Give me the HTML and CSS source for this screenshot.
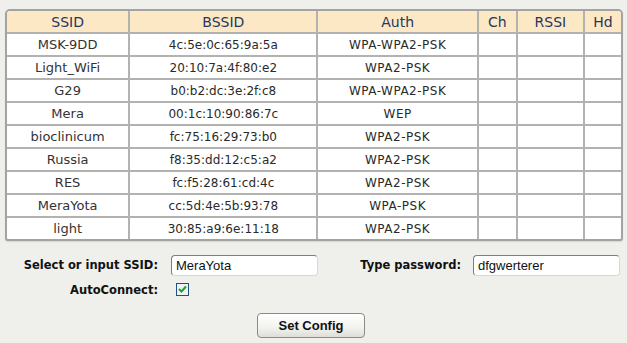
FILE: index.html
```html
<!DOCTYPE html>
<html lang="en">
<head>
    <meta charset="UTF-8">
    <title>WiFi Config</title>
    <link rel="stylesheet" href="styles.css">
</head>
<body>

    <!-- Scan results -->
    <div class="scan">
        <table class="nets">
            <colgroup>
                <col class="c-ssid">
                <col class="c-bssid">
                <col class="c-auth">
                <col class="c-ch">
                <col class="c-rssi">
                <col class="c-hd">
            </colgroup>
            <thead>
                <tr>
                    <th>SSID</th>
                    <th>BSSID</th>
                    <th>Auth</th>
                    <th>Ch</th>
                    <th>RSSI</th>
                    <th>Hd</th>
                </tr>
            </thead>
            <tbody>
                <tr><td class="ssid">MSK-9DD</td><td>4c:5e:0c:65:9a:5a</td><td class="auth">WPA-WPA2-PSK</td><td></td><td></td><td></td></tr>
                <tr><td class="ssid">Light_WiFi</td><td>20:10:7a:4f:80:e2</td><td class="auth">WPA2-PSK</td><td></td><td></td><td></td></tr>
                <tr><td class="ssid">G29</td><td>b0:b2:dc:3e:2f:c8</td><td class="auth">WPA-WPA2-PSK</td><td></td><td></td><td></td></tr>
                <tr><td class="ssid">Mera</td><td>00:1c:10:90:86:7c</td><td class="auth">WEP</td><td></td><td></td><td></td></tr>
                <tr><td class="ssid">bioclinicum</td><td>fc:75:16:29:73:b0</td><td class="auth">WPA2-PSK</td><td></td><td></td><td></td></tr>
                <tr><td class="ssid">Russia</td><td>f8:35:dd:12:c5:a2</td><td class="auth">WPA2-PSK</td><td></td><td></td><td></td></tr>
                <tr><td class="ssid">RES</td><td>fc:f5:28:61:cd:4c</td><td class="auth">WPA2-PSK</td><td></td><td></td><td></td></tr>
                <tr><td class="ssid">MeraYota</td><td>cc:5d:4e:5b:93:78</td><td class="auth">WPA-PSK</td><td></td><td></td><td></td></tr>
                <tr><td class="ssid">light</td><td>30:85:a9:6e:11:18</td><td class="auth">WPA2-PSK</td><td></td><td></td><td></td></tr>
            </tbody>
        </table>
    </div>

    <!-- Config form -->
    <form class="config" onsubmit="return false">
        <div class="row">
            <label class="lbl lbl-ssid" for="ssid">Select or input SSID:</label>
            <input class="field" id="ssid" type="text" value="MeraYota">
            <label class="lbl lbl-pass" for="pass">Type password:</label>
            <input class="field" id="pass" type="text" value="dfgwerterer">
        </div>
        <div class="row">
            <label class="lbl lbl-ssid" for="auto">AutoConnect:</label>
            <span class="check" id="auto"><svg width="9" height="8" viewBox="0 0 9 8"><path d="M1 4 L3.5 6.5 L8 1.5" fill="none" stroke="#21a121" stroke-width="2"/></svg></span>
        </div>
        <div class="actions">
            <button class="button" type="submit">Set Config</button>
        </div>
    </form>

</body>
</html>
```

FILE: styles.css
```css
body {
    margin: 0;
    padding: 0;
    background-color: #efefeb;
    font-family: "DejaVu Sans", Verdana, sans-serif;
    width: 627px;
    height: 343px;
    overflow: hidden;
}

.scan {
    margin: 9px 4px 0 5px;
    border: 2px solid #a3a3a0;
    border-radius: 5px 5px 3px 3px;
    box-shadow: 0 1px 1px #d6d6d2;
    overflow: hidden;
    background-color: #fff;
}

.nets {
    width: 100%;
    border-collapse: collapse;
    table-layout: fixed;
}

.c-ssid { width: 122px; }
.c-bssid { width: 188px; }
.c-auth { width: 160px; }
.c-ch { width: 39px; }
.c-rssi { width: 67px; }
.c-hd { width: 37px; }

.nets th,
.nets td {
    border: 2px solid #b2b2b0;
    text-align: center;
    padding: 0;
    white-space: nowrap;
    overflow: hidden;
}

.nets tr:first-child th { border-top: none; }
.nets tr:last-child td { border-bottom: none; }
.nets th:first-child, .nets td:first-child { border-left: none; }
.nets th:last-child, .nets td:last-child { border-right: none; }

.nets th {
    height: 21px;
    background-color: #fde8c5;
    color: #26375f;
    font-size: 14px;
    font-weight: normal;
}

.nets td {
    height: 21px;
    color: #2a2a2a;
    font-size: 12px;
}

.nets td.ssid {
    font-size: 13px;
    color: #333;
}

.nets td.auth {
    letter-spacing: 0.5px;
}

/* form below table */
.config {
    margin: 0;
    padding-top: 13px;
}

.row {
    display: flex;
    align-items: center;
    height: 22px;
    margin-bottom: 3px;
}

.lbl {
    font-size: 11.5px;
    font-weight: bold;
    color: #111;
    text-align: right;
}

.lbl-ssid {
    width: 158px;
    margin-right: 13px;
}

.lbl-pass {
    width: 103px;
    margin-left: 40px;
    margin-right: 12px;
}

.field {
    box-sizing: border-box;
    width: 147px;
    height: 21px;
    padding: 0 0 0 4px;
    border: 1px solid #d8d8d4;
    border-top-color: #7d7d79;
    border-left-color: #7d7d79;
    border-radius: 4px;
    background-color: #fff;
    font-family: "Liberation Sans", Arial, sans-serif;
    font-size: 13px;
    color: #111;
    outline: none;
}

.check {
    box-sizing: border-box;
    width: 13px;
    height: 13px;
    margin-left: 5px;
    margin-top: -2px;
    border: 1px solid #1c5180;
    background-color: #eef2f4;
    display: flex;
    align-items: center;
    justify-content: center;
}

.actions {
    display: flex;
    justify-content: center;
    padding-top: 9px;
    padding-right: 5px;
}

.button {
    width: 108px;
    height: 25px;
    border: 1px solid #8a8a86;
    border-radius: 4px;
    background: linear-gradient(#ffffff, #f2f2ee 60%, #deded9);
    font-family: "Liberation Sans", Arial, sans-serif;
    font-size: 13px;
    font-weight: bold;
    color: #111;
    cursor: pointer;
    padding: 0;
}
```
